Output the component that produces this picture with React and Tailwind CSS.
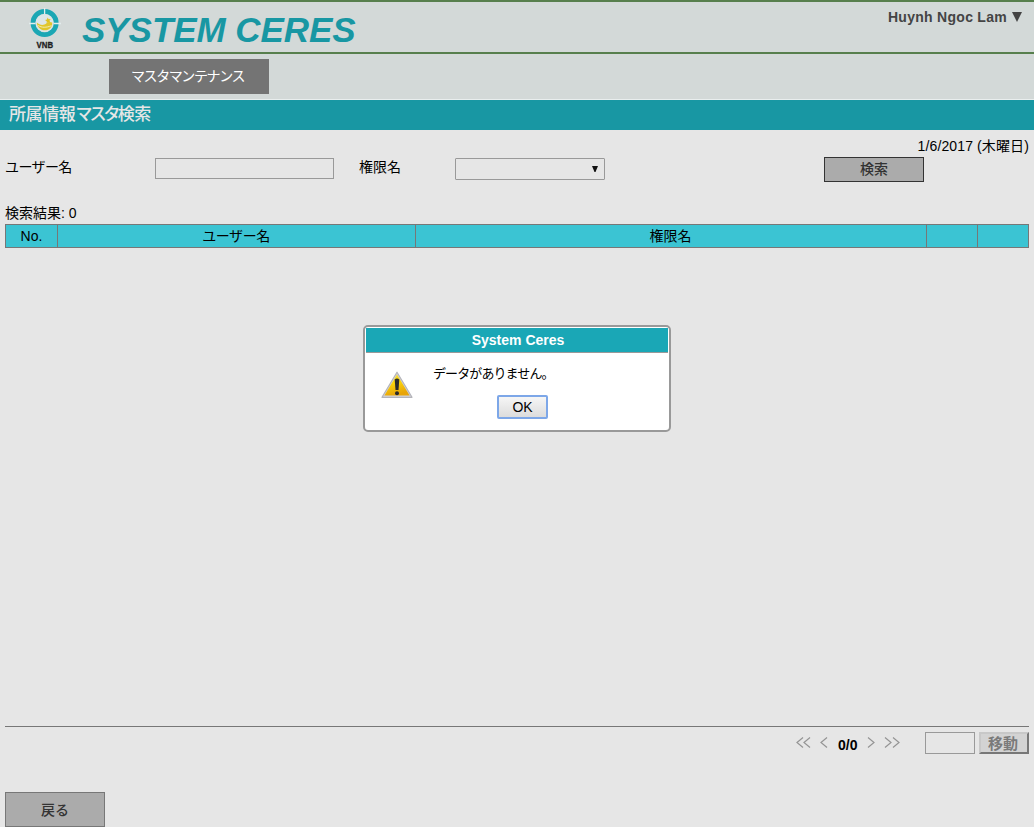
import React from "react";

function Logo() {
  return (
    <svg width="32" height="42" viewBox="0 0 32 42" className="block">
      <circle cx="15.600" cy="15" r="11.600" fill="none" stroke="#1ba7b4" strokeWidth="4.800" />
      <path d="M15.600 0V6.500M0 15.500H6.500M24.700 15.500H32" stroke="#e3eded" strokeWidth="1.300" />
      <circle cx="15.600" cy="15" r="9" fill="#dde6e8" />
      <path d="M7.800 14.500c3 3 7 3.200 9.700 .8c1.500-1.600 3.500-1.800 5.700-.8c.5 4.500-2.900 7.800-7.400 7.800c-4.500 0-7.600-3.300-8-7.800z" fill="#e0c62c" />
      <path d="M9 17.500c4 2.300 8 2.300 13.500 .2" fill="none" stroke="#f3efba" strokeWidth="0.900" />
      <path d="M18.500 9.500l1.200 1.700 2-.2-1.200 1.700.8 1.900-2-.6-1.600 1.200v-2l-1.700-1.200 2-.6z" fill="#dfc21f" />
      <text x="15.800" y="40" textAnchor="middle" fontFamily="Liberation Sans, sans-serif" fontWeight="700" fontSize="8.500" textLength="16.500" lengthAdjust="spacingAndGlyphs" fill="#1d2222" stroke="#1d2222" strokeWidth="0.300">VNB</text>
    </svg>
  );
}

function WarningIcon() {
  return (
    <svg width="32" height="28" viewBox="0 0 32 28" className="block">
      <defs>
        <linearGradient id="amber" x1="0" y1="0" x2="0.300" y2="1">
          <stop offset="0" stopColor="#f0dc50" />
          <stop offset="0.450" stopColor="#fbd60a" />
          <stop offset="1" stopColor="#e8a408" />
        </linearGradient>
      </defs>
      <path d="M16 1.200L31 26.300H1z" fill="#d4d4d8" stroke="#b4b4ba" strokeWidth="1.200" strokeLinejoin="round" />
      <path d="M16 3.500L28.600 24.600H3.400z" fill="url(#amber)" />
      <path d="M13.700 8.500q2.300-1.800 4.600 0l-.8 10.500h-3z" fill="#292a2c" />
      <circle cx="16" cy="22.200" r="2" fill="#292a2c" />
    </svg>
  );
}

function Chevrons({ d, width }) {
  return (
    <svg width={width} height="12" viewBox={`0 0 ${width} 12`} className="block" fill="none" stroke="#949494" strokeWidth="1.200">
      <path d={d} />
    </svg>
  );
}

function Dialog() {
  return (
    <div className="absolute left-[363px] top-[325px] h-[107px] w-[308px] rounded-[5px] border-2 border-[#999] bg-white p-px">
      <div className="h-[25px] border-b border-[#999] bg-[#1aa7b6] pl-[2px] text-center text-sm leading-[24px] font-bold text-white">System Ceres</div>
      <div className="flex">
        <div className="ml-[15px] mt-[18px]"><WarningIcon /></div>
        <div className="ml-5 flex flex-col">
          <div className="mt-[11px] h-5 text-[13px] leading-5 tracking-[-0.9px] whitespace-nowrap">データがありません。</div>
          <button className="ml-[64px] mt-[11px] h-6 w-[51px] rounded-[2px] border-2 border-[#7da7e8] bg-gradient-to-b from-[#f6f6f6] to-[#dcdcdc] text-sm leading-[19px]">OK</button>
        </div>
      </div>
    </div>
  );
}

export default function App() {
  return (
    <div className="h-[832px] w-[1034px] overflow-hidden bg-white font-['Liberation_Sans','Noto_Sans_CJK_JP',sans-serif] text-sm text-black">
      <div className="relative flex h-[827px] flex-col bg-[#e6e6e6]">
        <header className="flex h-[54px] shrink-0 border-y-2 border-[#577f4d] bg-[#d3d9d8]">
          <div className="ml-[29px] mt-[6px]"><Logo /></div>
          <h1 className="ml-[21px] mt-[8px] text-[35px] leading-10 font-bold tracking-[-0.05px] whitespace-nowrap text-[#1897a3] italic">SYSTEM CERES</h1>
          <div className="mt-[5px] mr-[12px] ml-auto flex h-5 items-center text-sm font-bold tracking-[0.28px] text-[#444]">
            Huynh Ngoc Lam
            <svg width="10" height="10" viewBox="0 0 10 10" className="ml-[5px]"><path d="M0 0h10L5 10z" fill="#444" /></svg>
          </div>
        </header>
        <nav className="h-[46px] shrink-0 border-b border-[#e9eeee] bg-[#d3d9d8] pt-[5px] pl-[109px]">
          <button className="block h-[35px] w-40 bg-[#747474] pr-[3px] text-[14px] leading-[35px] tracking-[-1.4px] text-white">マスタマンテナンス</button>
        </nav>
        <h2 className="h-[30px] shrink-0 bg-[#1897a3] pl-[9px] text-[17px] leading-[29px] font-medium whitespace-nowrap text-[#e6e6e6]">
          <span className="tracking-[-0.4px]">所属情報</span><span className="tracking-[-2.9px]">マスタ</span><span className="tracking-[-0.4px]">検索</span>
        </h2>
        <div className="h-[27px] shrink-0 pt-[6px] pr-[5px] text-right text-[14px] leading-5 tracking-[0.12px]">1/6/2017 (木曜日)</div>
        <div className="flex h-[25px] shrink-0 items-start pl-[5px]">
          <label className="w-[150px] leading-[21px] tracking-[-0.6px]">ユーザー名</label>
          <input className="mt-px h-[21px] w-[179px] border border-[#999] bg-transparent" />
          <label className="ml-[25px] w-24 leading-[21px]">権限名</label>
          <div className="mt-px flex h-[22px] w-[150px] items-center justify-end rounded-[1px] border border-[#999] pr-[6px]">
            <svg width="6" height="6" viewBox="0 0 6 6"><path d="M0 0h6L3.500 6h-1z" fill="#111" /></svg>
          </div>
          <button className="ml-[219px] h-[25px] w-[100px] border border-[#333] bg-[#ababab] leading-[23px] font-medium text-[#333]">検索</button>
        </div>
        <div className="mt-[20px] h-[22px] shrink-0 pl-[5px] leading-[22px]">検索結果: 0</div>
        <div className="mx-[5px] grid h-6 shrink-0 grid-cols-[52px_358px_511px_51px_50px] border border-[#777] bg-[#3bc4d3] text-center leading-[22px] [&>div]:border-[#777] [&>div:not(:last-child)]:border-r">
          <div>No.</div>
          <div className="pr-px tracking-[-0.4px]">ユーザー名</div>
          <div className="pr-px">権限名</div>
          <div />
          <div />
        </div>
        <main className="grow" />
        <footer className="mx-[5px] flex h-[66px] shrink-0 items-start border-t border-[#777] pt-[5px]">
          <div className="mt-[5px] ml-[791px] flex items-start">
            <Chevrons width={15} d="M7 .5L1 5.500L7 10.500M14 .5L8 5.500L14 10.500" />
            <div className="ml-[9px]"><Chevrons width={8} d="M7 .5L1 5.500L7 10.500" /></div>
            <span className="ml-[10px] w-5 text-sm leading-4 font-bold">0/0</span>
            <div className="ml-[9px]"><Chevrons width={8} d="M1 .5L7 5.500L1 10.500" /></div>
            <div className="ml-[9px]"><Chevrons width={16} d="M1 .5L7 5.500L1 10.500M9 .5L15 5.500L9 10.500" /></div>
          </div>
          <input className="ml-auto h-[22px] w-[50px] border border-[#999] bg-transparent" />
          <button className="ml-1 h-[22px] w-[50px] border-2 border-t-[#c8c8c8] border-r-[#777] border-b-[#777] border-l-[#c8c8c8] bg-[#d3d3d3] pr-[2px] text-[15px] leading-[17px] font-bold text-[#7a7a7a]">移動</button>
        </footer>
        <button className="ml-[5px] h-[35px] w-[100px] shrink-0 border border-[#777] bg-[#ababab] leading-[32px] font-medium text-[#333]">戻る</button>
        <Dialog />
      </div>
    </div>
  );
}
